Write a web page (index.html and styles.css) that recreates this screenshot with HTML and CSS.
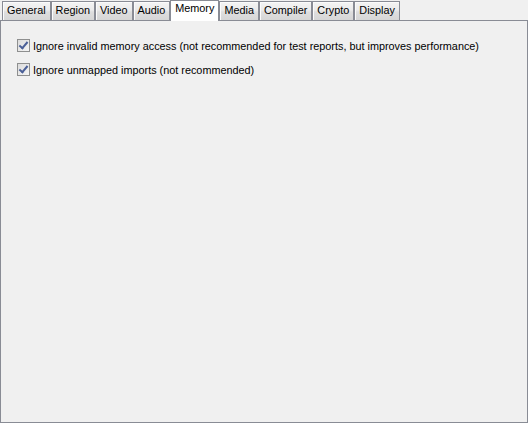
FILE: index.html
```html
<!DOCTYPE html>
<html lang="en">
<head>
    <meta charset="UTF-8">
    <title>Settings</title>
    <link rel="stylesheet" href="styles.css">
</head>
<body>
    <div class="window">
        <div class="tabs">
            <div class="tab">General</div>
            <div class="tab">Region</div>
            <div class="tab">Video</div>
            <div class="tab">Audio</div>
            <div class="tab active">Memory</div>
            <div class="tab">Media</div>
            <div class="tab">Compiler</div>
            <div class="tab">Crypto</div>
            <div class="tab">Display</div>
        </div>

        <div class="panel">
            <label class="option">
                <input type="checkbox" checked>
                <span class="box"></span>
                <span>Ignore invalid memory access (not recommended for test reports, but improves performance)</span>
            </label>
            <label class="option">
                <input type="checkbox" checked>
                <span class="box"></span>
                <span>Ignore unmapped imports (not recommended)</span>
            </label>
        </div>
    </div>
</body>
</html>
```

FILE: styles.css
```css
* {
    box-sizing: border-box;
    margin: 0;
    padding: 0;
}

html, body {
    height: 100%;
}

body {
    background-color: #f0f0f0;
    font-family: 'Liberation Sans', Arial, sans-serif;
    font-size: 10.85px;
    color: #000;
}

.window {
    height: 100%;
    display: flex;
    flex-direction: column;
}

.tabs {
    display: flex;
    align-items: flex-end;
    height: 21px;
    padding-left: 2px;
    position: relative;
    z-index: 2;
}

.tab {
    height: 19px;
    padding: 2px 4px 0 4px;
    border: 1px solid #898c95;
    border-bottom: none;
    background: linear-gradient(to bottom, #f4f4f4 0%, #ebebeb 45%, #dedede 55%, #d6d6d6 100%);
    box-shadow: inset 1px 1px 0 #fbfbfb;
    white-space: nowrap;
    margin-bottom: 1px;
}

.tab.active {
    height: 21px;
    margin-bottom: 0;
    padding-top: 1px;
    background: #ffffff;
    box-shadow: none;
}

.panel {
    flex: 1;
    margin-top: -1px;
    border: 1px solid #898c95;
    background-color: #f0f0f0;
    padding: 18px 0 0 16px;
    display: flex;
    flex-direction: column;
    gap: 11px;
}

.option {
    display: flex;
    align-items: center;
    gap: 3px;
    height: 13px;
}

.option input {
    display: none;
}

.box {
    width: 13px;
    height: 13px;
    border: 1px solid #8e8f8f;
    background: linear-gradient(135deg, #dcdcdc 0%, #f4f4f4 100%);
    position: relative;
}

.option input:checked + .box::after {
    content: "";
    position: absolute;
    left: 3px;
    top: 0px;
    width: 3px;
    height: 7px;
    border: solid #4a5f97;
    border-width: 0 2px 2px 0;
    transform: rotate(40deg);
}
```
